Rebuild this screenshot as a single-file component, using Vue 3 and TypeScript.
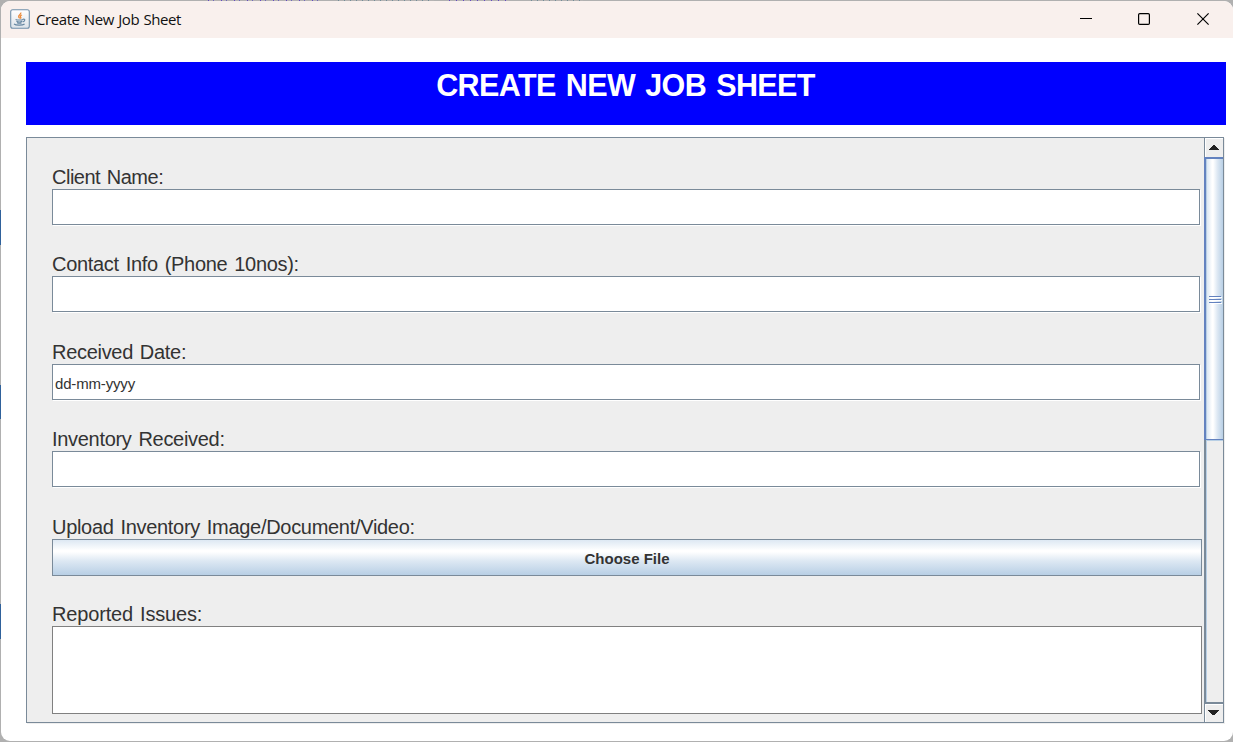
<script setup lang="ts">
import { ref } from 'vue'

interface Field {
  id: string
  label: string
  value: string
  kind: 'input' | 'button' | 'area'
}

const fields = ref<Field[]>([
  { id: 'client', label: 'Client Name:', value: '', kind: 'input' },
  { id: 'contact', label: 'Contact Info (Phone 10nos):', value: '', kind: 'input' },
  { id: 'date', label: 'Received Date:', value: 'dd-mm-yyyy', kind: 'input' },
  { id: 'inventory', label: 'Inventory Received:', value: '', kind: 'input' },
  { id: 'upload', label: 'Upload Inventory Image/Document/Video:', value: 'Choose File', kind: 'button' },
  { id: 'issues', label: 'Reported Issues:', value: '', kind: 'area' },
])
</script>

<template>
  <div class="desktop">
    <div class="window">
      <header class="titlebar">
        <svg class="app-icon" width="20" height="20" viewBox="0 0 20 20">
          <defs>
            <linearGradient id="tile" x1="0" y1="0" x2="0" y2="1">
              <stop offset="0" stop-color="#fff" />
              <stop offset="1" stop-color="#dce3e9" />
            </linearGradient>
          </defs>
          <rect x=".7" y=".7" width="18.6" height="18.6" rx="2" fill="url(#tile)" stroke="#7190aa" stroke-width="1.1" />
          <path d="M10.8 3.6c.7 1.7-3 2.5-2.1 4.3.3.7.9.9.9 1.5M12 6c-1.7.6-2.1 1.4-1.3 2.2.4.5 0 .9-.4 1.2" fill="none" stroke="#ec8b3a" stroke-width="1.3" />
          <path d="M5.6 10.4c1.7.9 6 .8 7.4 0M6.4 12.2c1.5.8 4.4.8 5.8 0M7 13.7c1.4.7 3.4.7 4.6 0M4 15c1.8 1.5 8.6 1.4 10.6 0M12.9 10.3c2.6-.8 2.6 1.6-.2 2.6" fill="none" stroke="#6687a2" stroke-width="1.1" />
        </svg>
        <span class="title">Create New Job Sheet</span>
        <div class="controls">
          <svg width="13" height="13" viewBox="0 0 13 13"><path d="M1 5.5h12" stroke="#000" /></svg>
          <svg width="13" height="13" viewBox="0 0 13 13"><rect x=".6" y=".6" width="10.8" height="10.8" rx="1.2" fill="none" stroke="#000" stroke-width="1.2" /></svg>
          <svg width="13" height="13" viewBox="0 0 13 13"><path d="M.4.4l11.2 11.2M11.6.4L.4 11.6" stroke="#000" stroke-width="1.15" /></svg>
        </div>
      </header>

      <main class="content">
        <h1 class="banner">CREATE NEW JOB SHEET</h1>
        <section class="scroll-pane">
          <form class="form" @submit.prevent>
            <div v-for="f in fields" :key="f.id" class="row">
              <label class="label"><span :class="['caption', f.id]">{{ f.label }}</span></label>
              <div v-if="f.kind === 'input'" class="input"><span>{{ f.value }}</span></div>
              <button v-else-if="f.kind === 'button'" class="choose" type="button">{{ f.value }}</button>
              <div v-else class="area"></div>
            </div>
          </form>
          <div class="scrollbar">
            <div class="arrow up">
              <svg width="15" height="18" viewBox="0 0 15 18" shape-rendering="crispEdges"><path d="M5 7h2v1h1v1h1v1h1v1h1v1H1v-1h1v-1h1V9h1V8h1z" fill="#222" /></svg>
            </div>
            <div class="thumb"><i></i><i></i><i></i></div>
            <div class="track"></div>
            <div class="arrow down">
              <svg width="15" height="18" viewBox="0 0 15 18" shape-rendering="crispEdges"><path d="M1 6h11v1h-1v1h-1v1H9v1H8v1H5v-1H4V9H3V8H2V7H1z" fill="#222" /></svg>
            </div>
          </div>
        </section>
      </main>
    </div>
  </div>
</template>

<style>
body {
  margin: 0;
  overflow: hidden;
}
</style>

<style scoped>
* {
  box-sizing: border-box;
}
.desktop {
  width: 1233px;
  height: 742px;
  padding: 1px 0 1px 1px;
  overflow: hidden;
  font-family: "Liberation Sans", Arial, sans-serif;
  color: #333;
  background:
    linear-gradient(#2f619b, #2f619b) 0 210px / 1px 35px no-repeat,
    linear-gradient(#2f619b, #2f619b) 0 385px / 1px 34px no-repeat,
    linear-gradient(#2f619b, #2f619b) 0 604px / 1px 35px no-repeat,
    repeating-linear-gradient(90deg, #6548c4 0 1px, #b5b3b3 1px 5px, #7167bd 5px 6px, #b5b3b3 6px 13px) 208px 0 / 110px 1px no-repeat,
    repeating-linear-gradient(90deg, #718d98 0 1px, #b5b3b3 1px 6px) 338px 0 / 96px 1px no-repeat,
    repeating-linear-gradient(90deg, #6548c4 0 1px, #b5b3b3 1px 7px) 449px 0 / 60px 1px no-repeat,
    repeating-linear-gradient(90deg, #718d98 0 1px, #b5b3b3 1px 6px) 531px 0 / 52px 1px no-repeat,
    #b0b0b0;
}
.window {
  height: 740px;
  display: flex;
  flex-direction: column;
  overflow: hidden;
  border-radius: 9px;
  background: #fff;
}
.titlebar {
  flex: 0 0 37px;
  display: flex;
  align-items: center;
  padding: 0 23px 0 9px;
  background: #f9f0ed;
}
.app-icon {
  margin-right: 6px;
  margin-top: -2px;
}
.title {
  margin-top: -2px;
  font: 15px/20px "Open Sans", "Noto Sans", sans-serif;
  letter-spacing: -0.42px;
  word-spacing: 0.8px;
  color: #111;
}
.controls {
  margin-left: auto;
  display: flex;
  gap: 46px;
}
.content {
  flex: 1;
  display: flex;
  flex-direction: column;
  gap: 12px;
  padding: 24px 7px 19px 25px;
}
.banner {
  flex: 0 0 63px;
  margin: 0;
  padding: 5px 1px 0 0;
  background: #00f;
  color: #fff;
  text-align: center;
  font-size: 30.5px;
  line-height: 36px;
  letter-spacing: -0.6px;
  word-spacing: 2.2px;
  font-weight: bold;
}
.scroll-pane {
  flex: 0 0 586px;
  width: 1198px;
  display: flex;
  border: 1px solid #7a8a99;
  background: #eee;
  overflow: hidden;
  box-shadow: 1px 1px 0 #eee;
}
.form {
  width: 1177px;
  padding: 26px 2px 0 25px;
  display: grid;
  grid-template-rows: 87px 88px 87px 88px 87px 115px;
}
.row {
  display: flex;
  flex-direction: column;
}
.label {
  height: 25px;
  display: flex;
  align-items: center;
  padding-top: 2px;
  font-size: 20px;
  line-height: 25px;
  letter-spacing: -0.3px;
  word-spacing: 1.6px;
  white-space: nowrap;
}
.caption.client {
  letter-spacing: -0.5px;
}
.caption.issues {
  letter-spacing: -0.16px;
}
.input {
  width: 1148px;
  height: 36px;
  display: flex;
  align-items: center;
  padding: 3px 0 0 2px;
  border: 1px solid #7a8a99;
  background: #fff;
  box-shadow: 1px 1px 0 #fff;
  font-size: 15px;
  letter-spacing: -0.17px;
}
.choose {
  height: 37px;
  padding: 2px 0 0;
  border: 1px solid #7a8a99;
  background: linear-gradient(#dde8f3 0%, #fff 30%, #fff 34%, #dde8f3 60%, #b8cfe5 100%);
  color: #333;
  font: bold 15px "Liberation Sans", Arial, sans-serif;
}
.area {
  height: 88px;
  border: 1px solid #808080;
  background: #fff;
}
.scrollbar {
  width: 19px;
  display: flex;
  flex-direction: column;
}
.arrow {
  flex: none;
  border-left: 1px solid #7a8a99;
  height: 19px;
  padding-left: 2px;
  background: #eee;
  box-shadow: inset 1px 1px 0 #fff;
}
.arrow.up {
  padding-left: 3px;
}
.arrow.down {
  height: 18px;
}
.arrow svg {
  display: block;
}
.thumb {
  flex: none;
  height: 283px;
  padding: 0 2px 0 3px;
  border: solid #6382bf;
  border-width: 2px 0 1px 2px;
  background: linear-gradient(90deg, #b8cfe5 0 1px, #dde8f3 1px, #fff 36%, #fff 42%, #dde8f3 67%, #b8cfe5);
  display: flex;
  flex-direction: column;
  justify-content: center;
  gap: 2px;
}
.thumb i {
  height: 1px;
  flex: none;
  background: #6382bf;
  box-shadow: 1px 1px 0 #fff;
}
.track {
  flex: 1;
  border-left: 2px solid #7a8a99;
  border-bottom: 2px solid #7a8a99;
  box-shadow: inset 1px 1px 0 #b8cfe5;
}
</style>
